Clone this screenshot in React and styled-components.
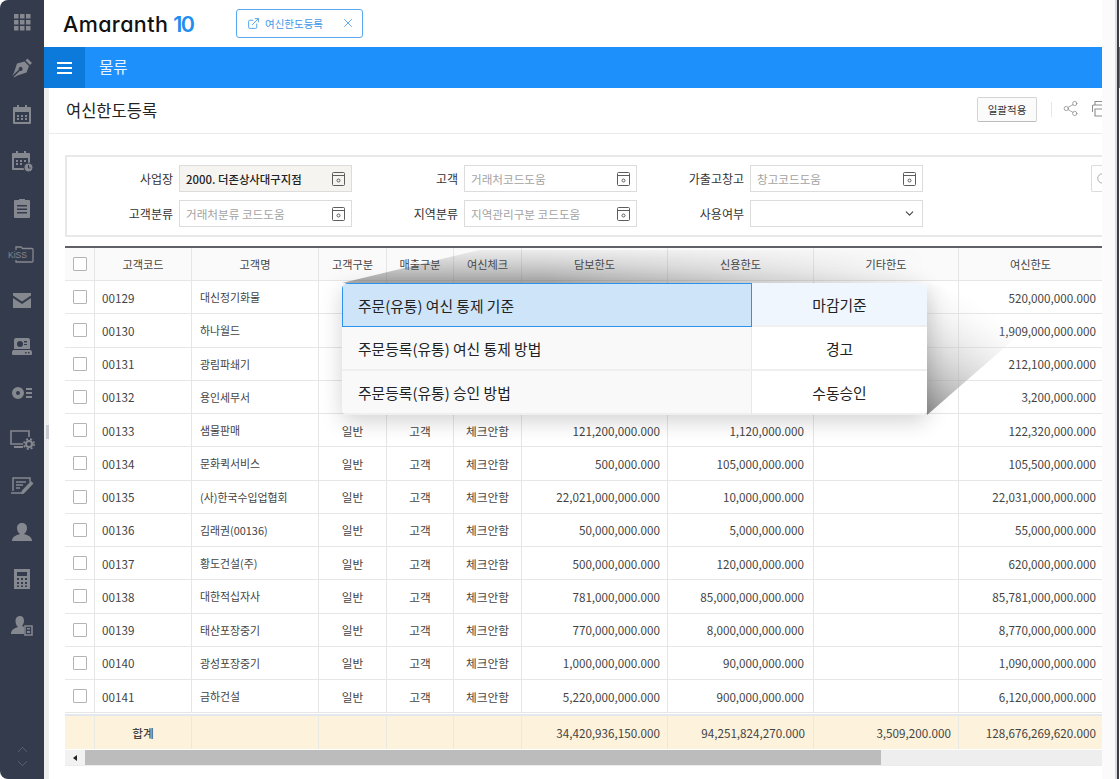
import React from 'react';
import styled, { createGlobalStyle } from 'styled-components';
import { ExternalLink, X, Share2, ChevronDown, ChevronUp, Search } from 'lucide-react';

const GlobalStyle = createGlobalStyle`
    html, body{
        margin: 0;
        padding: 0;
        background: #ffffff;
    }
    body{
        font-family: "Noto Sans CJK KR", "Noto Sans", sans-serif;
        color: #333;
    }
`

const Frame = styled.div`
    width: 1120px;
    height: 779px;
    display: flex;
    overflow: hidden;
    position: relative;
    background: #fff;
`

const Side = styled.aside`
    width: 44px;
    flex: none;
    background: #343b4d;
    border-radius: 8px 0 0 8px;
    display: flex;
    flex-direction: column;
    align-items: center;
    padding: 10px 0 7px;
    box-sizing: border-box;
`

const SideIcon = styled.div`
    width: 24px;
    height: 24px;
    flex: none;
    margin-bottom: 22.38px;
    color: #85888f;
    svg{
        display: block;
        overflow: visible;
    }
`

const SideArrows = styled.div`
    margin-top: auto;
    display: flex;
    flex-direction: column;
    align-items: center;
    color: #6d7281;
    svg{
        margin-top: -3px;
    }
`

const Splitter = styled.div`
    width: 3px;
    height: 14px;
    background: #c9cbd0;
    position: absolute;
    left: 46px;
    top: 425px;
`

const Main = styled.main`
    flex: 1;
    min-width: 0;
    display: flex;
    flex-direction: column;
`

const Header = styled.header`
    height: 47px;
    flex: none;
    display: flex;
    align-items: center;
    padding: 0 0 0 19px;
    gap: 29px;
`

const Logo = styled.div`
    width: 144px;
    font-family: "Inter", "Noto Sans", sans-serif;
    font-feature-settings: "cv11";
    font-size: 21.5px;
    font-weight: 500;
    color: #111;
    letter-spacing: 0.4px;
    white-space: nowrap;
    padding-top: 1px;
    span{
        color: #1f8ef1;
        margin-left: 5px;
        font-weight: 600;
        letter-spacing: -1.5px;
    }
`

const Tab = styled.div`
    width: 127px;
    height: 29px;
    box-sizing: border-box;
    margin-top: -1px;
    border: 1px solid #5aa9f0;
    border-radius: 3px;
    display: flex;
    align-items: center;
    padding: 0 7px 0 10px;
    color: #3f97e8;
    font-size: 10.5px;
    svg{
        flex: none;
    }
    span{
        margin-left: 5px;
        flex: 1;
        white-space: nowrap;
    }
`

const BlueBar = styled.div`
    height: 41px;
    flex: none;
    background: #1e90fb;
    display: flex;
    align-items: center;
    color: #e8f4ff;
    font-size: 15.5px;
`

const BarTitle = styled.span`
    margin-top: -3px;
`

const MenuButton = styled.div`
    width: 41px;
    height: 41px;
    background: #0b7adb;
    display: flex;
    align-items: center;
    justify-content: center;
    color: #fff;
    margin-right: 14px;
`

const Content = styled.div`
    flex: 1;
    min-height: 0;
    display: flex;
    flex-direction: column;
    padding-left: 5px;
    background: linear-gradient(to right, #eeeef0 0, #eeeef0 5px, #fff 5px);
`

const Body = styled.div`
    width: 1053px;
    padding-left: 16px;
    box-sizing: border-box;
    display: flex;
    flex-direction: column;
    flex: 1;
    min-height: 0;
    overflow: hidden;
`

const TitleRow = styled.div`
    height: 46px;
    box-sizing: border-box;
    flex: none;
    margin-left: -16px;
    padding-left: 17px;
    border-bottom: 1px solid #ececec;
    display: flex;
    align-items: center;
`

const Title = styled.h1`
    margin: -2px 0 0;
    font-size: 16.5px;
    font-weight: 400;
    color: #222;
    flex: 1;
`

const ApplyButton = styled.button`
    width: 60px;
    height: 25px;
    box-sizing: border-box;
    border: 1px solid #d4d4d4;
    border-bottom-color: #bdbdbd;
    border-radius: 2px;
    background: #fbfbfb;
    font: 10.5px "Noto Sans CJK KR", sans-serif;
    color: #333;
    padding: 0;
    margin-top: -3px;
`

const ToolDivider = styled.div`
    width: 1px;
    height: 15px;
    background: #e6e6e6;
    margin: -3px 10px 0 14px;
`

const ToolIcon = styled.div`
    color: #8d8d8d;
    margin-top: -4px;
    display: flex;
    margin-right: ${props => props.gap || 0}px;
    width: ${props => props.width}px;
    overflow: hidden;
    svg{
        display: block;
        flex: none;
    }
`

const SearchPanel = styled.section`
    margin-top: 21px;
    height: 82px;
    flex: none;
    box-sizing: border-box;
    border: 1px solid #e8e8e8;
    border-width: 2px 0 2px 2px;
    display: grid;
    grid-template-columns: 285px 285px 286px 1fr;
    grid-template-rows: 27px 27px;
    row-gap: 8px;
    padding-top: 8px;
    position: relative;
`

const Field = styled.div`
    display: flex;
    align-items: center;
    justify-content: flex-end;
`

const Label = styled.label`
    font-size: 12px;
    color: #333;
    margin-right: 6px;
    white-space: nowrap;
`

const InputBox = styled.div`
    width: 173px;
    height: 27px;
    box-sizing: border-box;
    border: 1px solid #dcdcdc;
    background: ${props => props.$filled ? '#f6f4f1' : '#fff'};
    display: flex;
    align-items: center;
    justify-content: space-between;
    padding: 0 6px;
    font-size: ${props => props.$filled ? '11.4px' : '11.6px'};
    font-weight: ${props => props.$filled ? 500 : 400};
    color: ${props => props.$filled ? '#222' : '#a3a3a3'};
    white-space: nowrap;
`

const CodeIconWrap = styled.span`
    display: flex;
    color: #5d5d5d;
`

const SearchButton = styled.div`
    position: absolute;
    right: 0;
    top: 8px;
    width: 11px;
    height: 27px;
    box-sizing: border-box;
    border: 1px solid #dcdcdc;
    border-right: 0;
    border-radius: 2px 0 0 2px;
    overflow: hidden;
    color: #888;
    svg{
        display: block;
        margin: 6px 0 0 4px;
    }
`

const GridWrap = styled.section`
    margin-top: 9px;
    flex: none;
    border-top: 2px solid #5e6065;
    position: relative;
`

const Table = styled.div`
    display: grid;
    grid-template-columns: 30px 97px 127px 68px 67px 68px 146px 146px 145px 143px;
`

const Cell = styled.div`
    height: ${props => props.$h}px;
    box-sizing: border-box;
    border-right: 1px solid #e6e6e6;
    border-bottom: 1px solid #e6e6e6;
    display: flex;
    align-items: center;
    justify-content: ${props => props.$right ? 'flex-end' : props.$left ? 'flex-start' : 'center'};
    padding: 0 ${props => props.$right ? props.$right : 0}px 0 ${props => props.$left || 0}px;
    font-size: ${props => props.$size || 11.7}px;
    color: #444;
    white-space: nowrap;
    overflow: hidden;
    background: ${props => props.$bg};
    &:last-child{
        border-right: 0;
    }
`

const Box = styled.span`
    width: 14px;
    height: 14px;
    box-sizing: border-box;
    border: 1px solid #b4b4b4;
    border-radius: 1px;
    background: #fff;
`

const RowsClip = styled.div`
    height: 433px;
    overflow: hidden;
`

const Footer = styled(Table)`
    border-top: 2px solid #e4e7ee;
`

const FootCell = styled.div`
    height: 33px;
    box-sizing: border-box;
    background: #fdf2dc;
    border-right: 1px solid #eae8e2;
    display: flex;
    align-items: center;
    justify-content: ${props => props.$right ? 'flex-end' : 'center'};
    padding: 0 ${props => props.$right || 0}px 1px 0;
    font-size: 11.7px;
    font-weight: ${props => props.$right ? 400 : 500};
    color: #444;
    white-space: nowrap;
    &:last-child{
        border-right: 0;
    }
`

const ScrollBar = styled.div`
    height: 15px;
    margin-top: 1px;
    background: #eeeeee;
    display: flex;
    border-bottom: 1px solid #ececec;
`

const ScrollLeft = styled.div`
    width: 20px;
    display: flex;
    align-items: center;
    justify-content: center;
    background: #f2f2f2;
    &::before{
        content: '';
        border: 3px solid transparent;
        border-right: 4px solid #222;
        border-left: 0;
    }
`

const ScrollThumb = styled.div`
    width: 796px;
    background: #bcbcbc;
`

const Wedge = styled.svg`
    position: absolute;
    left: 0;
    top: 0;
    pointer-events: none;
`

const Popup = styled.div`
    position: absolute;
    left: 277px;
    top: 35px;
    width: 585px;
    height: 132px;
    border-radius: 6px;
    overflow: hidden;
    background: #fff;
    box-shadow: 0 6px 22px rgba(0, 0, 0, 0.18);
    display: grid;
    grid-template-columns: 410px 175px;
    grid-template-rows: 44px 44px 44px;
`

const PopLabel = styled.div`
    box-sizing: border-box;
    display: flex;
    align-items: center;
    font-size: 14.8px;
    color: #222;
    background: ${props => props.$active ? '#cde4f9' : '#f9f9f9'};
    border: ${props => props.$active ? '1.5px solid #2a93ee' : '0'};
    border-bottom: ${props => props.$active ? '1.5px solid #2a93ee' : '2px solid #efefef'};
    border-right: ${props => props.$active ? '1.5px solid #2a93ee' : '1px solid #e8e8e8'};
    padding-left: ${props => props.$active ? '15px' : '16px'};
`

const PopValue = styled.div`
    box-sizing: border-box;
    display: flex;
    align-items: center;
    justify-content: center;
    font-size: 14.8px;
    color: #222;
    background: ${props => props.$active ? '#eff6fe' : '#fff'};
    border-bottom: 2px solid #efefef;
`

const RightEdge = styled.div`
    position: absolute;
    right: 1px;
    top: 0;
    bottom: 0;
    width: 17px;
    background: #fbfbfb;
    border-right: 2px solid #3a3d42;
    box-shadow: inset -2px 0 0 #dcdcdc;
    box-sizing: border-box;
    z-index: 3;
`

// the first four rows lie under the popup, only the last column shows
const rows = [
    ['00129', '대신정기화물', '', '', '', '', '', '', '520,000,000.000'],
    ['00130', '하나월드', '', '', '', '', '', '', '1,909,000,000.000'],
    ['00131', '광림파쇄기', '', '', '', '', '', '', '212,100,000.000'],
    ['00132', '용인세무서', '', '', '', '', '', '', '3,200,000.000'],
    ['00133', '샘물판매', '일반', '고객', '체크안함', '121,200,000.000', '1,120,000.000', '', '122,320,000.000'],
    ['00134', '문화퀵서비스', '일반', '고객', '체크안함', '500,000.000', '105,000,000.000', '', '105,500,000.000'],
    ['00135', '(사)한국수입업협회', '일반', '고객', '체크안함', '22,021,000,000.000', '10,000,000.000', '', '22,031,000,000.000'],
    ['00136', '김래권(00136)', '일반', '고객', '체크안함', '50,000,000.000', '5,000,000.000', '', '55,000,000.000'],
    ['00137', '황도건설(주)', '일반', '고객', '체크안함', '500,000,000.000', '120,000,000.000', '', '620,000,000.000'],
    ['00138', '대한적십자사', '일반', '고객', '체크안함', '781,000,000.000', '85,000,000,000.000', '', '85,781,000,000.000'],
    ['00139', '태산포장중기', '일반', '고객', '체크안함', '770,000,000.000', '8,000,000,000.000', '', '8,770,000,000.000'],
    ['00140', '광성포장중기', '일반', '고객', '체크안함', '1,000,000,000.000', '90,000,000.000', '', '1,090,000,000.000'],
    ['00141', '금하건설', '일반', '고객', '체크안함', '5,220,000,000.000', '900,000,000.000', '', '6,120,000,000.000'],
];

const heads = ['고객코드', '고객명', '고객구분', '매출구분', '여신체크', '담보한도', '신용한도', '기타한도', '여신한도'];
const cols = [
    { $left: 7, $size: 11.7 },
    { $left: 8, $size: 10.9 },
    {}, {}, {},
    { $right: 7 },
    { $right: 9 },
    { $right: 7 },
    { $right: 6 },
];
const popItems = [
    ['주문(유통) 여신 통제 기준', '마감기준'],
    ['주문등록(유통) 여신 통제 방법', '경고'],
    ['주문등록(유통) 승인 방법', '수동승인'],
];

function CodeIcon(){
    return(
        <CodeIconWrap>
            <svg width="13" height="14" viewBox="0 0 13 14" fill="none" stroke="currentColor">
                <rect x="0.5" y="0.5" width="12" height="13" rx="1" />
                <path d="M0.5 3.5h12" />
                <circle cx="6.5" cy="8.5" r="1.5" />
            </svg>
        </CodeIconWrap>
    )
}

const sideIcons = [
    <g fill="currentColor">{[3, 9, 15].flatMap(y => [3, 9, 15].map(x => <rect key={x + '-' + y} x={x + 1} y={y + 1} width="4.5" height="4.5" />))}</g>,
    <path fill="currentColor" fillRule="evenodd" d="M17.500 2.500l4.500 4.500-2 2-4.500-4.500zM14.500 5.500l4.500 4.500-2.500 6.500-9 3-3.500 2-.5-.5 6.300-6.300a2 2 0 1 0-1-1L2 20l2-3.500 3-9z" />,
    <path fill="currentColor" fillRule="evenodd" d="M7 2h2v2h6V2h2v2h3a1 1 0 0 1 1 1v15a1 1 0 0 1-1 1H4a1 1 0 0 1-1-1V5a1 1 0 0 1 1-1h3zM5 9v10h14V9zM7 12h2v2H7zM11 12h2v2h-2zM15 12h2v2h-2zM7 15h2v2H7zM11 15h2v2h-2zM15 15h2v2h-2z" />,
    <g><path fill="currentColor" fillRule="evenodd" d="M6 2h2v2h6V2h2v2h3a1 1 0 0 1 1 1v15a1 1 0 0 1-1 1H3a1 1 0 0 1-1-1V5a1 1 0 0 1 1-1h3zM4 9v10h14V9zM6 11h2v2H6zM10 11h2v2h-2zM14 11h2v2h-2zM6 14h2v2H6zM10 14h2v2h-2z" /><circle cx="18.500" cy="18.500" r="4.500" fill="#85888f" stroke="#343b4d" /><path d="M18.500 16v3h2" stroke="#343b4d" fill="none" /></g>,
    <path fill="currentColor" fillRule="evenodd" d="M5 4h4V3h6v1h4a1 1 0 0 1 1 1v16a1 1 0 0 1-1 1H5a1 1 0 0 1-1-1V5a1 1 0 0 1 1-1zM7 9v1.500h10V9zM7 12.500V14h10v-1.500zM7 16v1.500h10V16z" />,
    <g fill="none" stroke="currentColor" strokeWidth="1.300"><path d="M6 8V5h5l1.500 1.500H22a1 1 0 0 1 1 1V19a1 1 0 0 1-1 1H6v-2" /><text x="-2" y="16" fontSize="8.500" fill="currentColor" stroke="none" fontFamily="Liberation Sans, sans-serif">KiSS</text></g>,
    <path fill="currentColor" d="M3 5h18v2.500l-9 6-9-6zM3 10l9 6 9-6v10H3z" />,
    <path fill="currentColor" fillRule="evenodd" d="M6 3h12a2 2 0 0 1 2 2v9H4V5a2 2 0 0 1 2-2zM10 6a3 3 0 1 0 0 6 3 3 0 0 0 0-6zM14 6v1.500h3V6zM14 9v1h3V9zM3 15h18l1 2v2a1 1 0 0 1-1 1H3a1 1 0 0 1-1-1v-2zM15 17v1.500h1.500V17zM18 17v1.500h1.500V17z" />,
    <path fill="currentColor" fillRule="evenodd" d="M8 6a6 6 0 1 1 0 12A6 6 0 0 1 8 6zm0 4a2 2 0 1 0 0 4 2 2 0 0 0 0-4zM16 7h6v2h-6zM16 11h6v2h-6zM16 15h6v2h-6z" />,
    <g><path fill="none" stroke="currentColor" strokeWidth="1.600" d="M13 17H1V4h18v6" /><path stroke="currentColor" strokeWidth="2" d="M4 20h9" /><circle cx="19" cy="17" r="3" fill="none" stroke="currentColor" strokeWidth="2" /><circle cx="19" cy="17" r="5" fill="none" stroke="currentColor" strokeWidth="1.800" strokeDasharray="2 2" /></g>,
    <g><path fill="none" stroke="currentColor" strokeWidth="1.500" d="M3 17V4h17v4M1 19h13" /><path stroke="currentColor" strokeWidth="1.500" d="M6 8h10M6 11h7M6 14h4" /><path fill="currentColor" d="M21 7l2.500 2.500-9 9.500-3.500 1 1-3.500z" /></g>,
    <path fill="currentColor" d="M12 3c3 0 5 2 5 5s-1.500 5-3 6c3 1 7 2 8 6v1H2v-1c1-4 5-5 8-6-1.500-1-3-3-3-6s2-5 5-5z" />,
    <path fill="currentColor" fillRule="evenodd" d="M4 2h16v20H4zM7 5v4h10V5zM7 11v2h2v-2zM11 11v2h2v-2zM15 11v2h2v-2zM7 15v2h2v-2zM11 15v2h2v-2zM15 15v2h2v-2zM7 18.500v1.500h2v-1.500zM11 18.500v1.500h2v-1.500zM15 18.500v1.500h2v-1.500z" />,
    <g><path fill="currentColor" d="M10 3c2.500 0 4 2 4 4.500S13 12 12 13c1 .3 1.500.5 2 .8V21H1v-1c.5-3.500 4-5 7-6-1.500-1-2.500-3.500-2.500-6.500S7.500 3 10 3z" /><path fill="none" stroke="currentColor" strokeWidth="1.600" d="M15 13h7v9h-7z" /><path fill="currentColor" d="M17 15h3v1.500h-3zM17 18h3v2h-3z" /></g>,
];

function App(){
    return(
        <>
            <GlobalStyle />
            <Frame>
                <Side>
                    {sideIcons.map((icon, i) => (
                        <SideIcon key={'side' + i}>
                            <svg width="24" height="24" viewBox="0 0 24 24">{icon}</svg>
                        </SideIcon>
                    ))}
                    <SideArrows>
                        <ChevronUp size={17} strokeWidth={1} />
                        <ChevronDown size={17} strokeWidth={1} />
                    </SideArrows>
                </Side>
                <Splitter />
                <Main>
                    <Header>
                        <Logo>Amaranth<span>10</span></Logo>
                        <Tab>
                            <ExternalLink size={13} strokeWidth={1.6} />
                            <span>여신한도등록</span>
                            <X size={14} strokeWidth={1.4} />
                        </Tab>
                    </Header>
                    <BlueBar>
                        <MenuButton>
                            <svg width="15" height="12" viewBox="0 0 15 12" fill="currentColor">
                                <rect y="0" width="15" height="2" />
                                <rect y="5" width="15" height="2" />
                                <rect y="10" width="15" height="2" />
                            </svg>
                        </MenuButton>
                        <BarTitle>물류</BarTitle>
                    </BlueBar>
                    <Content>
                        <Body>
                            <TitleRow>
                                <Title>여신한도등록</Title>
                                <ApplyButton>일괄적용</ApplyButton>
                                <ToolDivider />
                                <ToolIcon gap={13}><Share2 size={17} strokeWidth={1.1} /></ToolIcon>
                                <ToolIcon width={10}>
                                    <svg width="12" height="17" viewBox="0 0 12 17" fill="none" stroke="currentColor" strokeWidth="1.100">
                                        <path d="M3 5V1.500h9M0.500 12V6a1 1 0 0 1 1-1H12M3 9h9v7H3z" />
                                    </svg>
                                </ToolIcon>
                            </TitleRow>
                            <SearchPanel>
                                <Field><Label>사업장</Label><InputBox $filled>2000. 더존상사대구지점<CodeIcon /></InputBox></Field>
                                <Field><Label>고객</Label><InputBox>거래처코드도움<CodeIcon /></InputBox></Field>
                                <Field><Label>가출고창고</Label><InputBox>창고코드도움<CodeIcon /></InputBox></Field>
                                <div />
                                <Field><Label>고객분류</Label><InputBox>거래처분류 코드도움<CodeIcon /></InputBox></Field>
                                <Field><Label>지역분류</Label><InputBox>지역관리구분 코드도움<CodeIcon /></InputBox></Field>
                                <Field><Label>사용여부</Label><InputBox><span /><ChevronDown size={13} color="#444" /></InputBox></Field>
                                <SearchButton><Search size={14} strokeWidth={1.2} /></SearchButton>
                            </SearchPanel>
                            <GridWrap>
                                <Table>
                                    <Cell $h={33} $bg="#fafafa"><Box /></Cell>
                                    {heads.map(h => <Cell key={h} $h={33} $bg="#fafafa" $size={11.2}>{h}</Cell>)}
                                </Table>
                                <RowsClip>
                                    {rows.map(row => (
                                        <Table key={row[0]}>
                                            <Cell $h={33.25} $bg="#fff"><Box /></Cell>
                                            {row.map((v, i) => <Cell key={i} $h={33.25} $bg="#fff" {...cols[i]}>{v}</Cell>)}
                                        </Table>
                                    ))}
                                </RowsClip>
                                <Footer>
                                    <FootCell />
                                    <FootCell>합계</FootCell>
                                    <FootCell />
                                    <FootCell />
                                    <FootCell />
                                    <FootCell />
                                    <FootCell $right={7}>34,420,936,150.000</FootCell>
                                    <FootCell $right={8}>94,251,824,270.000</FootCell>
                                    <FootCell $right={7}>3,509,200.000</FootCell>
                                    <FootCell $right={6}>128,676,269,620.000</FootCell>
                                </Footer>
                                <ScrollBar>
                                    <ScrollLeft />
                                    <ScrollThumb />
                                </ScrollBar>
                                <Wedge width="1037" height="200" viewBox="0 0 1037 200">
                                    <defs>
                                        <linearGradient id="topFold" x1="0" y1="0" x2="0" y2="1">
                                            <stop offset="0" stopColor="#555" stopOpacity="0.08" />
                                            <stop offset="1" stopColor="#555" stopOpacity="0.5" />
                                        </linearGradient>
                                        <linearGradient id="topFade" gradientUnits="userSpaceOnUse" x1="480" y1="0" x2="860" y2="0">
                                            <stop offset="0" stopColor="#fff" />
                                            <stop offset="1" stopColor="#000" />
                                        </linearGradient>
                                        <mask id="topMask" maskUnits="userSpaceOnUse" x="277" y="0" width="600" height="40">
                                            <rect x="277" y="0" width="600" height="40" fill="url(#topFade)" />
                                        </mask>
                                        <linearGradient id="sideFold" gradientUnits="userSpaceOnUse" x1="862" y1="167" x2="930" y2="65">
                                            <stop offset="0" stopColor="#808080" stopOpacity="0.9" />
                                            <stop offset="0.65" stopColor="#c8c8c8" stopOpacity="0.35" />
                                            <stop offset="1" stopColor="#e8e8e8" stopOpacity="0" />
                                        </linearGradient>
                                    </defs>
                                    <path d="M277 35 L414 2 H862 V35 Z" fill="url(#topFold)" mask="url(#topMask)" />
                                    <path d="M862 167 V35 L977 67 Z" fill="url(#sideFold)" />
                                </Wedge>
                                <Popup>
                                    {popItems.map((item, i) => (
                                        <React.Fragment key={item[0]}>
                                            <PopLabel $active={i === 0}>{item[0]}</PopLabel>
                                            <PopValue $active={i === 0}>{item[1]}</PopValue>
                                        </React.Fragment>
                                    ))}
                                </Popup>
                            </GridWrap>
                        </Body>
                    </Content>
                </Main>
                <RightEdge />
            </Frame>
        </>
    )
}

export default App;
